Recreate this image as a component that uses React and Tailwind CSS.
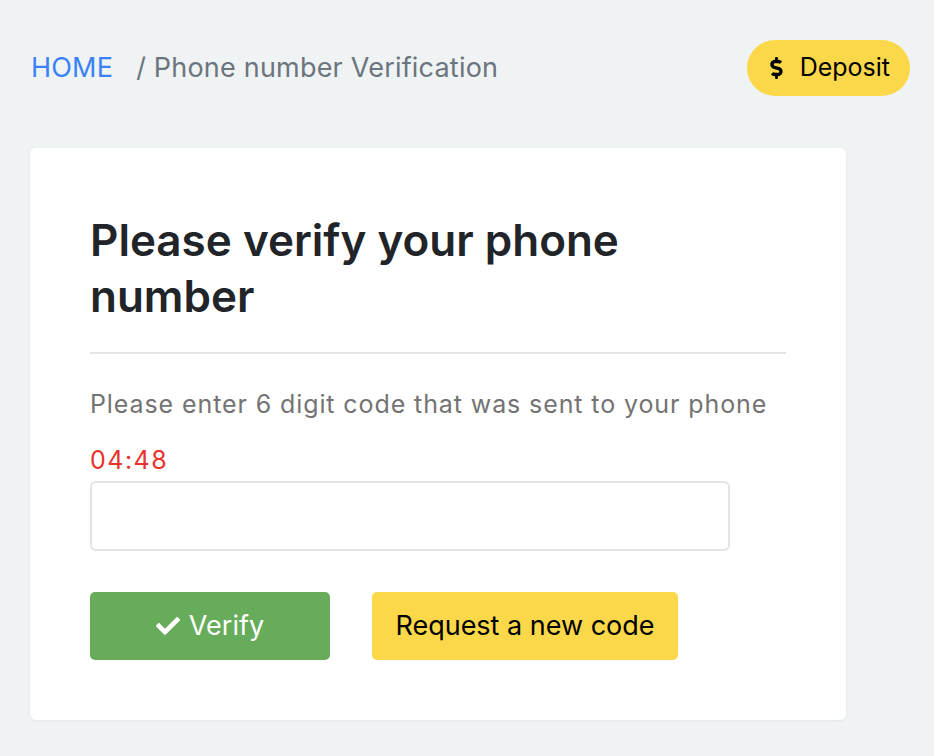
import React from "react";
import { FaCheck, FaDollarSign } from "react-icons/fa";

export default function App() {
  return (
    <div className="min-h-[756px] w-full bg-[#eff3f4] font-['Inter',sans-serif]">
      <div className="flex items-center justify-between pl-[31px] pr-[24px] pt-[40px]">
        <div className="flex items-center text-[27px] leading-[56px] tracking-[0.2px]">
          <span className="text-[#3b82f6]">HOME</span>
          <span className="ml-[23px] text-[#6c757d]">/ Phone number Verification</span>
        </div>
        <button className="flex h-[56px] items-center gap-[16px] rounded-full bg-[#fbd84a] pl-[22px] pr-[20px] text-[25px] text-black">
          <FaDollarSign className="h-[22px] w-[15px]" />
          <span>Deposit</span>
        </button>
      </div>
      <div className="ml-[30px] mt-[52px] w-[816px] rounded-[6px] bg-white px-[60px] pb-[60px] pt-[64px] shadow-[0_1px_3px_rgba(0,0,0,0.06)]">
        <h1 className="max-w-[600px] text-[44px] font-semibold leading-[56px] text-[#212529]">
          Please verify your phone number
        </h1>
        <div className="mt-[28px] h-[2px] bg-[#e5e5e5]" />
        <p className="mt-[29px] text-[25px] leading-[42px] tracking-[0.9px] text-[#737373]">
          Please enter 6 digit code that was sent to your phone
        </p>
        <div className="mt-[20px] text-[25px] leading-[30px] tracking-[1.5px] text-[#e8322b]">04:48</div>
        <input className="mt-[6px] h-[70px] w-[640px] rounded-[6px] border-2 border-[#e2e4e8] bg-white outline-none" />
        <div className="mt-[41px] flex gap-[42px]">
          <button className="flex h-[68px] w-[240px] items-center justify-center gap-[9px] rounded-[5px] bg-[#67ac5b] text-[27px] text-white">
            <FaCheck className="h-[24px] w-[24px]" />
            <span>Verify</span>
          </button>
          <button className="flex h-[68px] w-[306px] items-center justify-center rounded-[5px] bg-[#fbd84a] text-[27px] text-black">
            Request a new code
          </button>
        </div>
      </div>
    </div>
  );
}
